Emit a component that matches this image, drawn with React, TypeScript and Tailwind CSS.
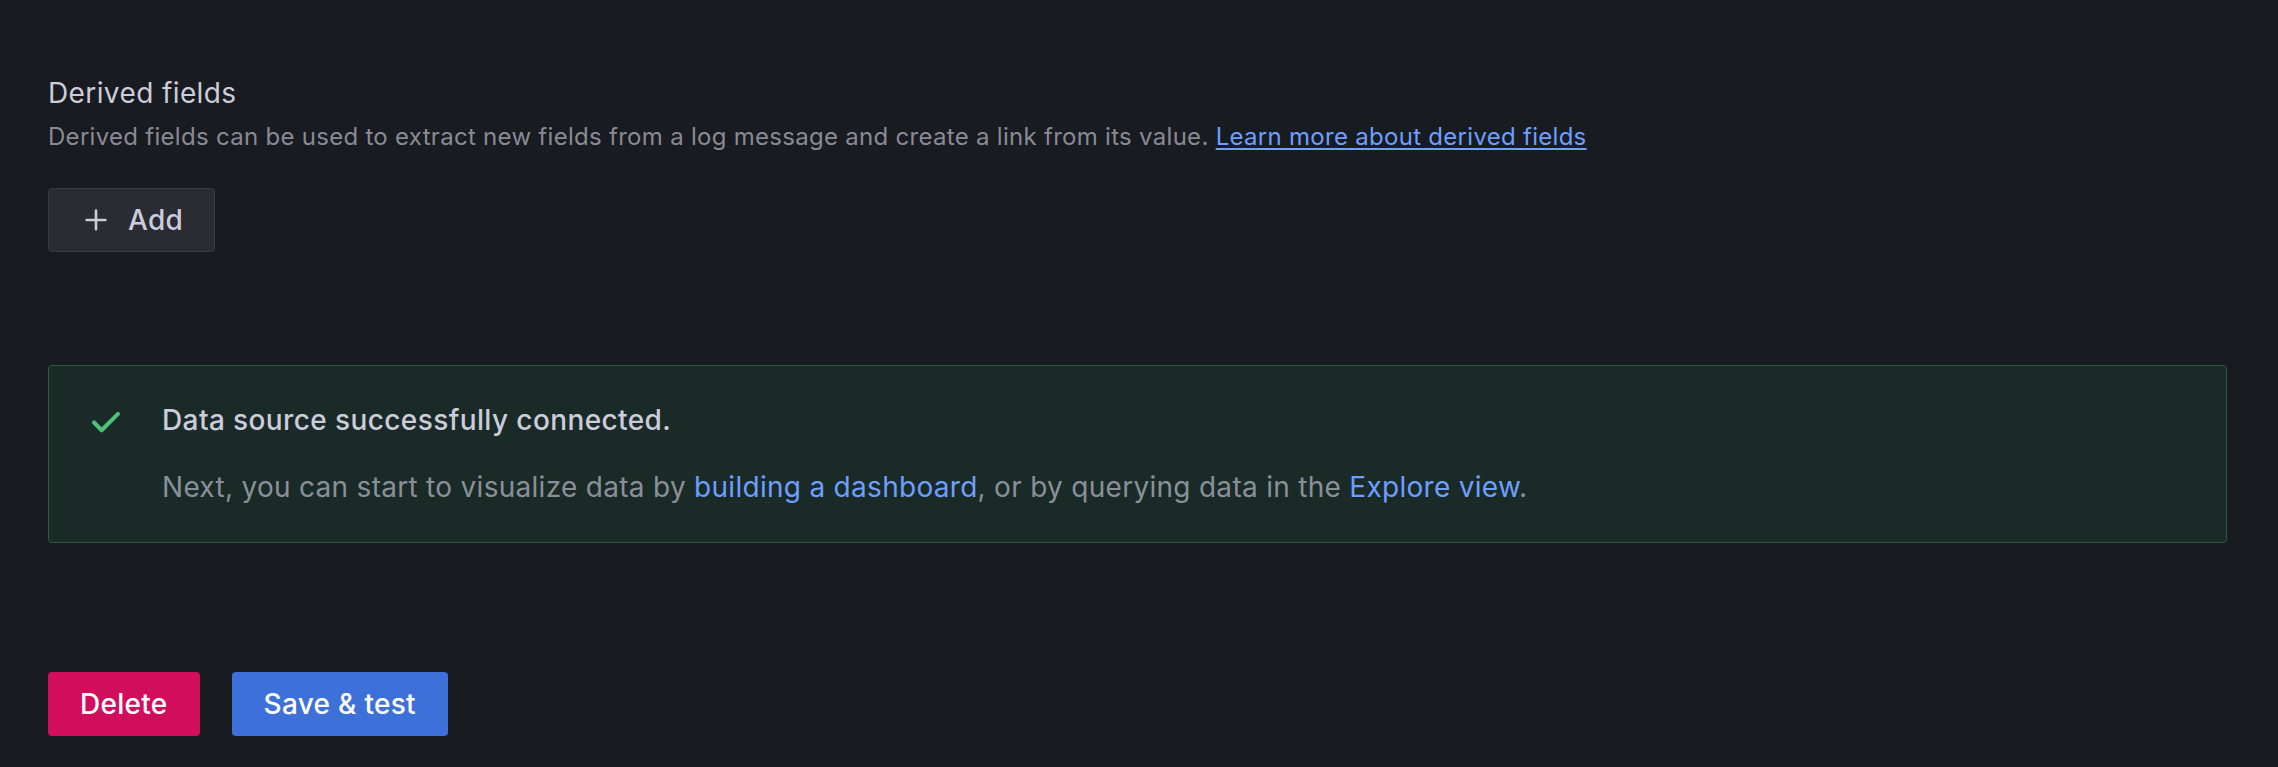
import type { ReactNode } from 'react';

const FONT = { fontFamily: 'Inter, "Noto Sans", "Liberation Sans", sans-serif' };

function PlusIcon() {
  return (
    <svg viewBox="0 0 24 24" className="h-8 w-8 fill-current">
      <path d="M19,11H13V5a1,1,0,0,0-2,0v6H5a1,1,0,0,0,0,2h6v6a1,1,0,0,0,2,0V13h6a1,1,0,0,0,0-2Z" />
    </svg>
  );
}

function CheckIcon() {
  return (
    <svg viewBox="0 0 24 24" className="h-12 w-12 fill-[#4fc07a]">
      <path d="M18.71,7.21a1,1,0,0,0-1.42,0L9.84,14.67,6.71,11.53A1,1,0,1,0,5.29,13l3.84,3.84a1,1,0,0,0,1.42,0l8.16-8.16A1,1,0,0,0,18.71,7.21Z" />
    </svg>
  );
}

function Link({ children, underline }: { children: ReactNode; underline?: boolean }) {
  return (
    <a
      href="#"
      className={underline ? 'text-[#6e9fff] underline underline-offset-[3px]' : 'text-[#6e9fff]'}
    >
      {children}
    </a>
  );
}

export default function App() {
  return (
    <div
      style={FONT}
      className="min-h-[767px] w-full bg-[#181b1f] pt-[75px] pr-[51px] pl-[48px] tracking-[0.018em] text-[#ccccdc]"
    >
      <h3 className="text-[28px] leading-[36px] font-normal tracking-[0.014em]">Derived fields</h3>
      <p className="mt-[10px] text-[24px] leading-[32px] text-[#ccccdc]/65">
        Derived fields can be used to extract new fields from a log message and create a link from its
        value. <Link underline>Learn more about derived fields</Link>
      </p>

      <button
        type="button"
        className="mt-[35px] flex h-[64px] items-center gap-4 rounded-[4px] border border-[#383a41] bg-[#2a2c32] px-[31px] text-[28px] font-medium text-[#ccccdc]"
      >
        <PlusIcon />
        Add
      </button>

      <div className="mt-[113px] flex h-[178px] rounded-[4px] border border-[#2d5a40] bg-[#1a2a27]">
        <div className="pt-[32px] pl-[33px]">
          <CheckIcon />
        </div>
        <div className="pt-[36px] pl-[32px]">
          <div className="text-[28px] leading-[36px] font-medium tracking-[0.014em]">
            Data source successfully connected.
          </div>
          <div className="mt-[31px] text-[28px] leading-[36px] text-[#ccccdc]/65">
            Next, you can start to visualize data by <Link>building a dashboard</Link>, or by querying
            data in the <Link>Explore view</Link>.
          </div>
        </div>
      </div>

      <div className="mt-[129px] flex gap-8">
        <button
          type="button"
          className="h-[64px] rounded-[4px] bg-[#d10e5c] px-8 text-[28px] font-medium text-white"
        >
          Delete
        </button>
        <button
          type="button"
          className="h-[64px] rounded-[4px] bg-[#3d71d9] px-8 text-[28px] font-medium text-white"
        >
          Save &amp; test
        </button>
      </div>
    </div>
  );
}
